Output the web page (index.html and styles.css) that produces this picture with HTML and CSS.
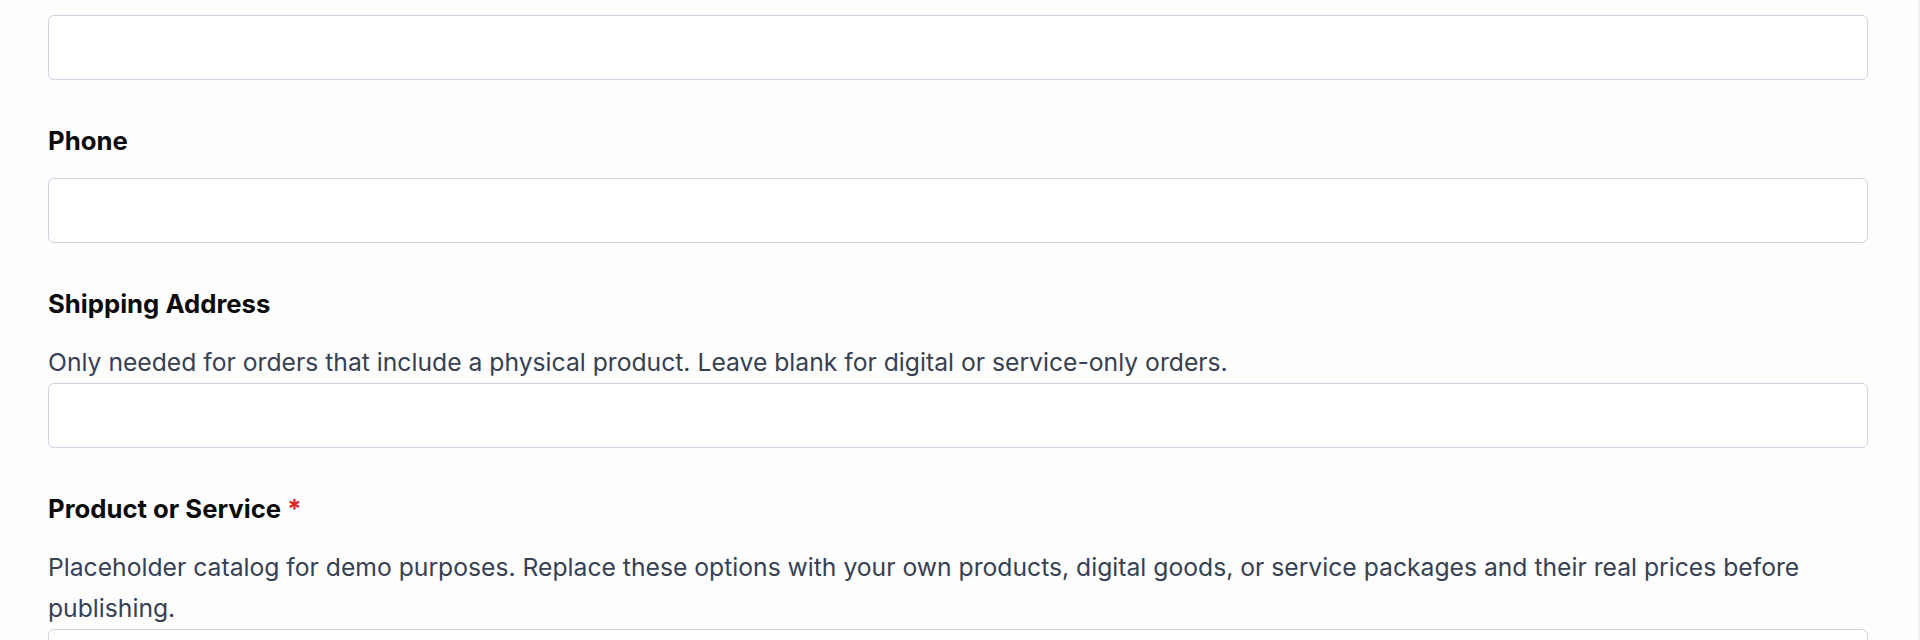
FILE: index.html
```html
<!DOCTYPE html>
<html lang="en">
<head>
    <meta charset="UTF-8">
    <meta name="viewport" content="width=device-width, initial-scale=1.0">
    <title>Order Form</title>
    <link rel="stylesheet" href="styles.css">
</head>
<body>
    <div class="page">
        <form class="order-form">
            <div class="field field-first">
                <input type="email" class="field-input" id="email">
            </div>
            <div class="field">
                <label class="field-label" for="phone">Phone</label>
                <input type="tel" class="field-input" id="phone">
            </div>
            <div class="field">
                <label class="field-label" for="address">Shipping Address</label>
                <p class="field-help">Only needed for orders that include a physical product. Leave blank for digital or service-only orders.</p>
                <input type="text" class="field-input" id="address">
            </div>
            <div class="field">
                <label class="field-label" for="product">Product or Service <span class="required">*</span></label>
                <p class="field-help">Placeholder catalog for demo purposes. Replace these options with your own products, digital goods, or service packages and their real prices before publishing.</p>
                <select class="field-input" id="product"></select>
            </div>
        </form>
    </div>
</body>
</html>
```

FILE: styles.css
```css
* {
    box-sizing: border-box;
}
body {
    margin: 0;
    background: #fdfdfe;
    font-family: Inter, "Noto Sans", sans-serif;
    font-size: 24.7px;
    color: #0b0b0b;
}
.page {
    padding: 15px 50px 0 48px;
    border-right: 2px solid #f1f2f4;
    min-height: 100vh;
}
.field {
    margin-top: 44px;
}
.field-first {
    margin-top: 0;
}
.field-label {
    display: block;
    font-size: 25.7px;
    font-weight: 700;
    line-height: 34px;
    margin-bottom: 20px;
}
.required {
    color: #dc2626;
}
.field-help {
    margin: -20px 0 0;
    padding-top: 21px;
    line-height: 41px;
    color: #374151;
}
.field-input {
    display: block;
    width: 100%;
    height: 65px;
    padding: 0 16px;
    border: 1px solid #cbd4e1;
    border-radius: 6px;
    background: #ffffff;
    font: inherit;
    appearance: none;
}
```
